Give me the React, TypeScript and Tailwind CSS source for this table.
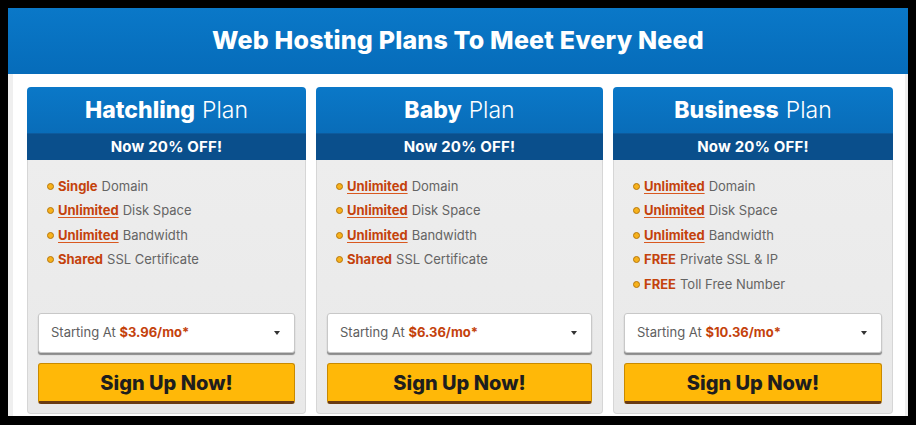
import React from 'react';

type Feature = { strong: string; rest: string; underline?: boolean };

type PlanCard = {
  name: string;
  price: string;
  features: Feature[];
};

const plans: PlanCard[] = [
  {
    name: 'Hatchling',
    price: '$3.96/mo*',
    features: [
      { strong: 'Single', rest: 'Domain' },
      { strong: 'Unlimited', rest: 'Disk Space', underline: true },
      { strong: 'Unlimited', rest: 'Bandwidth', underline: true },
      { strong: 'Shared', rest: 'SSL Certificate' },
    ],
  },
  {
    name: 'Baby',
    price: '$6.36/mo*',
    features: [
      { strong: 'Unlimited', rest: 'Domain', underline: true },
      { strong: 'Unlimited', rest: 'Disk Space', underline: true },
      { strong: 'Unlimited', rest: 'Bandwidth', underline: true },
      { strong: 'Shared', rest: 'SSL Certificate' },
    ],
  },
  {
    name: 'Business',
    price: '$10.36/mo*',
    features: [
      { strong: 'Unlimited', rest: 'Domain', underline: true },
      { strong: 'Unlimited', rest: 'Disk Space', underline: true },
      { strong: 'Unlimited', rest: 'Bandwidth', underline: true },
      { strong: 'FREE', rest: 'Private SSL & IP' },
      { strong: 'FREE', rest: 'Toll Free Number' },
    ],
  },
];

const Plan = ({ plan }: { plan: PlanCard }) => (
  <div className="flex flex-col">
    <div className="rounded-t-[4px] bg-gradient-to-b from-[#0a78c8] to-[#0866b0]">
      <div className="h-[46px] flex items-center justify-center text-white text-[23px] leading-none">
        <span className="font-extrabold">{plan.name}</span>
        <span className="font-light ml-[7px]">Plan</span>
      </div>
      <div className="h-[27px] bg-[#0a4f8c] border-t border-[#0d5a9c] flex items-center justify-center text-white text-[15px] font-bold tracking-[0.2px]">
        Now 20% OFF!
      </div>
    </div>
    <div className="flex-1 flex flex-col bg-gradient-to-b from-[#ededed] to-[#e9e9e9] border border-t-0 border-[#d6d6d6] rounded-b-[4px] px-[10px] pt-[14px] pb-[9px]">
      <ul className="pl-[9px]">
        {plan.features.map((f, i) => (
          <li key={i} className="h-[24.5px] flex items-center text-[13px] text-[#646464]">
            <span className="w-[7px] h-[7px] rounded-full bg-[#f7b21c] border border-[#b7770c] mr-[4px]" />
            <span
              className={
                f.underline
                  ? 'font-bold text-[#c4420c] underline underline-offset-2 decoration-[#d9581f]'
                  : 'font-bold text-[#c4420c]'
              }
            >
              {f.strong}
            </span>
            <span className="ml-[4px]">{f.rest}</span>
          </li>
        ))}
      </ul>
      <div className="mt-auto">
        <div className="h-[40px] bg-white border border-[#c8c8c8] rounded-[3px] shadow-[0_2px_1px_#8a8a8a] flex items-center justify-between pl-[12px] pr-[14px] text-[13px] text-[#5e5e5e]">
          <span>
            Starting At <span className="font-bold text-[#c4420c]">{plan.price}</span>
          </span>
          <span className="w-0 h-0 border-l-[3.5px] border-r-[3.5px] border-t-[4px] border-l-transparent border-r-transparent border-t-[#333]" />
        </div>
        <button className="mt-[10px] w-full h-[41px] bg-[#ffb808] border border-[#c98a00] border-b-[3px] border-b-[#6a3b12] rounded-[3px] text-[#1e1e1e] text-[20px] font-extrabold">
          Sign Up Now!
        </button>
      </div>
    </div>
  </div>
);

export default function App() {
  return (
    <div className="w-[916px] h-[425px] bg-black pt-[8px] pl-[8px] pr-[8px] pb-[9px]" style={{ fontFamily: 'Inter, "Noto Sans", sans-serif' }}>
      <div className="h-full bg-white flex flex-col">
        <div className="h-[66px] shrink-0 bg-gradient-to-b from-[#0a78c8] to-[#066cba] flex items-center justify-center text-white text-[25px] font-extrabold tracking-[0.2px]">
          Web Hosting Plans To Meet Every Need
        </div>
        <div className="flex-1 border-l-[5px] border-r-[3px] border-[#efefef] pl-[14px] pr-[9px] pt-[13px] pb-[2px] grid grid-cols-[279px_287px_280px] gap-[10px]">
          {plans.map((p) => (
            <Plan key={p.name} plan={p} />
          ))}
        </div>
      </div>
    </div>
  );
}
